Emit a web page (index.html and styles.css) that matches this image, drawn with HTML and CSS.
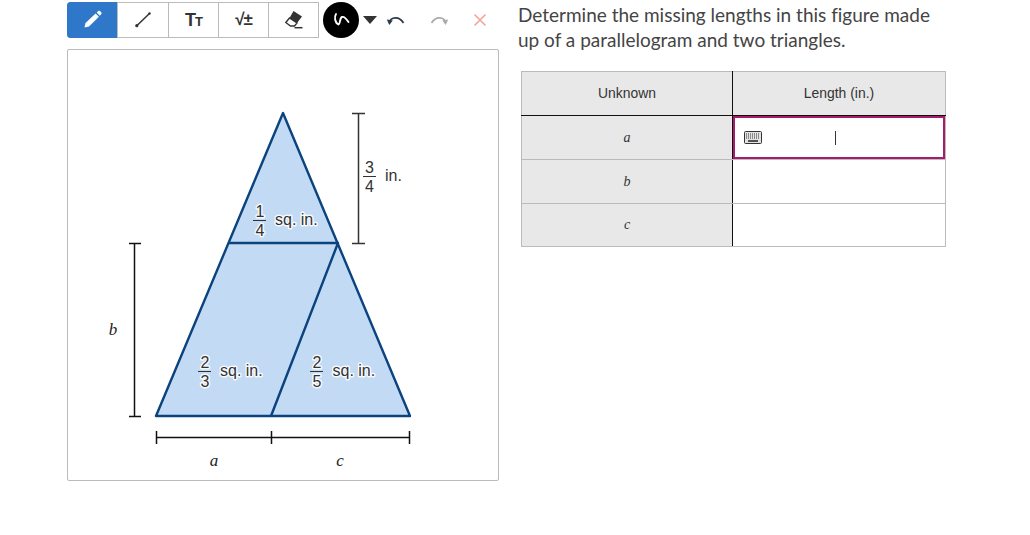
FILE: index.html
```html
<!doctype html>
<html>

<head>
   <meta charset="utf-8">
   <title>Missing lengths</title>
   <link rel="stylesheet" href="styles.css">
</head>

<body>
   <div class="page">
      <div class="leftCol">
         <div class="toolbar">
            <div class="toolGroup">
               <button class="tool active">
                  <svg width="20" height="20" viewBox="0 0 20 20"><path d="M1.500 17.500l1-4.500L12.600 3.400l3.300 3.300L6 16.500z" fill="#fff"/><path d="M13.600 2.400l1.700-1.500c.6-.4 1.200-.3 1.700.2l1.300 1.300c.5.5.5 1.200 0 1.700l-1.500 1.600z" fill="#fff"/></svg>
               </button>
               <button class="tool wide">
                  <svg width="20" height="20" viewBox="0 0 20 20"><path d="M4 15.500L16.500 3.500" stroke="#333" stroke-width="1.500"/><circle cx="3.800" cy="15.700" r="1.600" fill="#333"/><circle cx="16.500" cy="3.500" r="1.200" fill="#333"/></svg>
               </button>
               <button class="tool"><span class="ttIcon">T<small>T</small></span></button>
               <button class="tool"><span class="mathIcon">√±</span></button>
               <button class="tool">
                  <svg width="20" height="20" viewBox="0 0 20 20"><path d="M9.500 1L18 6.500l-5 6.500-7.500-5z" fill="#333"/><path d="M5.500 8l7.500 5-2.500 3H6.500L1.800 12.500z" fill="#fff" stroke="#333" stroke-width="1.400"/><path d="M10.500 17.700h8" stroke="#333" stroke-width="1.500"/></svg>
               </button>
            </div>
            <div class="penDot">
               <svg width="20" height="20" viewBox="0 0 20 20"><path d="M5 4C3 7 4 13 7.500 14.500 9.500 14 8.500 8 11 7c2.500-1 4.500 2 6.500 5" fill="none" stroke="#fff" stroke-width="1.900" stroke-linecap="round"/></svg>
            </div>
            <div class="caret"></div>
            <button class="plainBtn undoBtn">
               <svg width="20" height="14" viewBox="0 0 20 14"><path d="M3 9.500C5 4 13 2.500 17.500 10" fill="none" stroke="#2b3a4a" stroke-width="1.700"/><path d="M.8 6.500l6 1-3.500 4.500z" fill="#2b3a4a"/></svg>
            </button>
            <button class="plainBtn redoBtn">
               <svg width="20" height="14" viewBox="0 0 20 14"><path d="M17 9.500C15 4 7 2.500 2.500 10" fill="none" stroke="#aaa" stroke-width="1.700"/><path d="M19.200 6.500l-6 1 3.500 4.500z" fill="#aaa"/></svg>
            </button>
            <button class="plainBtn closeBtn">
               <svg width="14" height="14" viewBox="0 0 14 14"><path d="M1.500 1.500l11 11M12.500 1.500l-11 11" stroke="#f2a898" stroke-width="1.700"/></svg>
            </button>
         </div>

         <div class="figureBox">
            <svg class="figure" width="430" height="430" viewBox="68 50 430 430">
               <g class="shapes">
                  <path d="M283 113L156 416H410Z"/>
                  <path d="M228 243H338L271 416"/>
               </g>
               <g class="dims">
                  <path d="M358.500 113V243M352 113.500H365M352 243.500H365"/>
               </g>
               <g class="dimsDark">
                  <path d="M134.500 243V416M129 243.500H141M129 416.500H141"/>
                  <path d="M156 437.500H410M156.500 431V444M271.500 431V444M409.500 431V444"/>
               </g>

               <text class="frac" x="369.500" y="173">3</text>
               <path class="fracBar" d="M363 176.500H376"/>
               <text class="frac" x="369.500" y="192">4</text>
               <text class="label" x="385" y="181">in.</text>

               <text class="frac halo" x="260" y="217">1</text>
               <path class="fracBar" d="M253 220.500H266"/>
               <text class="frac halo" x="260" y="236">4</text>
               <text class="label halo" x="275" y="225">sq. in.</text>

               <text class="frac halo" x="205" y="368">2</text>
               <path class="fracBar" d="M198 371.500H211"/>
               <text class="frac halo" x="205" y="387">3</text>
               <text class="label halo" x="220" y="376">sq. in.</text>

               <text class="frac halo" x="317" y="368">2</text>
               <path class="fracBar" d="M310 371.500H323"/>
               <text class="frac halo" x="317" y="387">5</text>
               <text class="label halo" x="332.500" y="376">sq. in.</text>

               <text class="varName" x="113" y="335">b</text>
               <text class="varName" x="214" y="466">a</text>
               <text class="varName" x="340" y="466">c</text>
            </svg>
         </div>
      </div>

      <div class="rightCol">
         <p class="question">Determine the missing lengths in this figure made up of a parallelogram and two triangles.</p>
         <table class="answerTable">
            <tr class="headRow">
               <th>Unknown</th>
               <th>Length (in.)</th>
            </tr>
            <tr>
               <td class="nameCell"><i>a</i></td>
               <td class="valueCell focused">
                  <div class="inputBox">
                     <svg class="keyboard" width="18" height="13" viewBox="0 0 18 13">
                        <rect x=".5" y=".5" width="17" height="12" rx="1" fill="#e2e2e2" stroke="#333"/>
                        <path d="M2 3h14M2 5h14M2 7h14" stroke="#333" stroke-dasharray="1 1"/>
                        <path d="M4 10h10" stroke="#222" stroke-width="1.500"/>
                     </svg>
                     <span class="cursor"></span>
                  </div>
               </td>
            </tr>
            <tr>
               <td class="nameCell"><i>b</i></td>
               <td class="valueCell"></td>
            </tr>
            <tr>
               <td class="nameCell"><i>c</i></td>
               <td class="valueCell"></td>
            </tr>
         </table>
      </div>
   </div>
</body>

</html>
```

FILE: styles.css
```css
html,
body {
   margin: 0;
   padding: 0;
   background: #fff;
   font-family: "Liberation Sans", Arial, sans-serif;
   color: #333;
}

.page {
   display: flex;
   width: 1030px;
   height: 535px;
   overflow: hidden;
   box-sizing: border-box;
   padding: 2px 0 0 67px;
}

.leftCol {
   width: 432px;
   flex: none;
}

.toolbar {
   display: flex;
   align-items: center;
   height: 36px;
}

.toolGroup {
   display: flex;
}

.tool {
   display: flex;
   align-items: center;
   justify-content: center;
   width: 51px;
   height: 36px;
   margin-right: -1px;
   padding: 0;
   background: #fff;
   border: 1px solid #bbb;
   box-sizing: border-box;
   color: #333;
}

.tool.wide {
   width: 52px;
}

.tool.active {
   background: #2f78c9;
   border-color: #2f78c9;
   border-radius: 3px 0 0 3px;
}

.ttIcon {
   font-size: 18px;
   font-weight: bold;
   line-height: 1;
   letter-spacing: -1px;
}

.ttIcon small {
   font-size: 13px;
}

.mathIcon {
   font-size: 17px;
   font-weight: bold;
   letter-spacing: -1px;
}

.penDot {
   display: flex;
   align-items: center;
   justify-content: center;
   width: 36px;
   height: 36px;
   margin-left: 5px;
   background: #000;
   border-radius: 50%;
}

.caret {
   width: 0;
   height: 0;
   margin-left: 4px;
   margin-top: -1px;
   border-left: 7.500px solid transparent;
   border-right: 7.500px solid transparent;
   border-top: 8px solid #333;
}

.plainBtn {
   display: flex;
   align-items: center;
   justify-content: center;
   padding: 0;
   background: none;
   border: none;
}

.undoBtn {
   width: 20px;
   margin-left: 9px;
}

.redoBtn {
   width: 20px;
   margin-left: 23px;
}

.closeBtn {
   width: 14px;
   margin-left: 24px;
}

.figureBox {
   width: 432px;
   height: 432px;
   margin-top: 11px;
   background: #fff;
   border: 1px solid #bbb;
   border-radius: 2px;
   box-sizing: border-box;
}

.figure {
   display: block;
}

.shapes path {
   fill: #c2daf3;
   stroke: #0b437f;
   stroke-width: 2.400;
   stroke-linejoin: round;
}

.shapes path + path {
   fill: none;
}

.dims path {
   fill: none;
   stroke: #333;
   stroke-width: 1.500;
}

.dimsDark path {
   fill: none;
   stroke: #111;
   stroke-width: 1.500;
}

.frac,
.label {
   font-family: "Liberation Sans", Arial, sans-serif;
   font-size: 16px;
   fill: #333;
}

.frac {
   text-anchor: middle;
}

.halo {
   stroke: #fff;
   stroke-width: 3px;
   stroke-opacity: .85;
   paint-order: stroke;
   stroke-linejoin: round;
}

.fracBar {
   fill: none;
   stroke: #333;
   stroke-width: 1;
}

.varName {
   font-family: "Liberation Serif", "Times New Roman", serif;
   font-style: italic;
   font-size: 17px;
   text-anchor: middle;
   fill: #222;
}

.rightCol {
   margin-left: 19px;
   width: 430px;
}

.question {
   margin: 0;
   font-family: Lato, sans-serif;
   font-size: 19px;
   font-variant-ligatures: none;
   line-height: 25px;
   width: 425px;
   color: #444;
}

.answerTable {
   border-collapse: collapse;
   table-layout: fixed;
   width: 425px;
   margin: 19px 0 0 3px;
   font-size: 13.900px;
}

.answerTable th,
.answerTable td {
   padding: 0;
   border: 1px solid #bbb;
   text-align: center;
   font-weight: normal;
   box-sizing: border-box;
}

.answerTable th {
   height: 44px;
   padding-bottom: 1px;
   background: #e8e8e8;
   border-bottom: 1px solid #111;
}

.answerTable td {
   height: 44px;
}

.answerTable tr:last-child td {
   height: 43px;
}

.answerTable th:first-child,
.answerTable td:first-child {
   width: 211px;
   border-right: 1px solid #111;
}

.nameCell {
   background: #e8e8e8;
   font-family: "Liberation Serif", "Times New Roman", serif;
   font-size: 14px;
}

.valueCell {
   position: relative;
   background: #fff;
}

.inputBox {
   position: absolute;
   top: 0;
   left: 0;
   right: 0;
   bottom: 0;
   display: flex;
   align-items: center;
   border: 2px solid #a81b6c;
   box-sizing: border-box;
   padding-left: 9px;
}

.keyboard {
   flex: none;
}

.cursor {
   width: 1px;
   height: 14px;
   margin-left: 73px;
   background: #333;
}
```
